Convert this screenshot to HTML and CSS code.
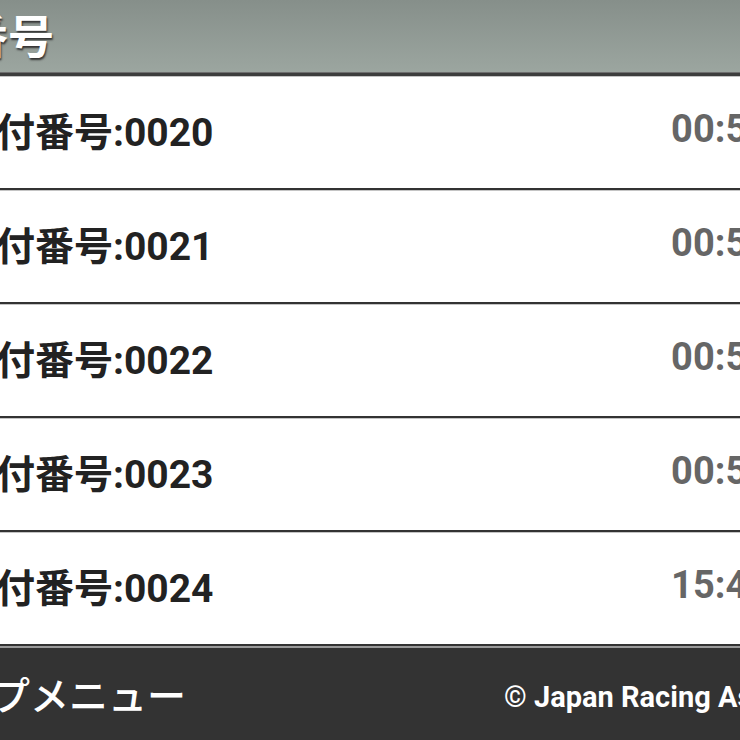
FILE: index.html
```html
<!DOCTYPE html>
<html lang="ja">

<head>
    <meta charset="UTF-8">
    <title>受付番号一覧</title>
    <link rel="stylesheet" href="styles.css">
</head>

<body>
    <div class="page">
        <div class="head">
            <h1>受付番号</h1>
        </div>
        <ul class="list">
            <li class="item"><span class="no">受付番号:0020</span><span class="time">00:50</span></li>
            <li class="item"><span class="no">受付番号:0021</span><span class="time">00:50</span></li>
            <li class="item"><span class="no">受付番号:0022</span><span class="time">00:50</span></li>
            <li class="item"><span class="no">受付番号:0023</span><span class="time">00:50</span></li>
            <li class="item"><span class="no">受付番号:0024</span><span class="time">15:40</span></li>
        </ul>
        <div class="foot">
            <a class="menu" href="#">トップメニュー</a>
            <span class="copy">&copy; Japan Racing Association</span>
        </div>
    </div>
</body>

</html>
```

FILE: styles.css
```css
* {
    font-family: Roboto, "Noto Sans CJK JP", sans-serif;
    box-sizing: border-box;
}

body {
    margin: 0;
    overflow: hidden;
    background-color: #fff;
}

.page {
    width: 1020px;
    margin-left: -140px;
}

.head {
    height: 76px;
    padding-left: 10px;
    padding-bottom: 8px;
    display: flex;
    align-items: center;
    background: linear-gradient(#868f8a, #9ca6a0);
    border-bottom: 3px solid #3d3d3d;
    box-shadow: inset 0 -1px #6e6e6e;
}

.head h1 {
    margin: 0;
    font-size: 46px;
    font-weight: bold;
    color: #fff;
    text-shadow: 1px 2px 2px #333;
}

.list {
    list-style: none;
    margin: 0;
    padding: 0;
}

.item {
    height: 114px;
    display: flex;
    align-items: center;
    justify-content: space-between;
    padding-left: 97px;
    padding-right: 111px;
    padding-bottom: 8px;
    border-top: 1px solid #c4c4c4;
    border-bottom: 2px solid #333;
}

.no {
    font-size: 39px;
    font-weight: bold;
    color: #222;
}

.time {
    font-size: 38px;
    font-weight: bold;
    color: #666;
}

.foot {
    height: 130px;
    display: flex;
    align-items: center;
    justify-content: space-between;
    padding: 0 8px 38px 53px;
    background-color: #333;
    border-top: 2px solid #9a9a9a;
}

.menu {
    font-size: 39px;
    font-weight: 500;
    color: #fff;
    text-decoration: none;
}

.copy {
    margin-top: 8px;
    font-size: 29px;
    font-weight: bold;
    color: #fff;
}
```
